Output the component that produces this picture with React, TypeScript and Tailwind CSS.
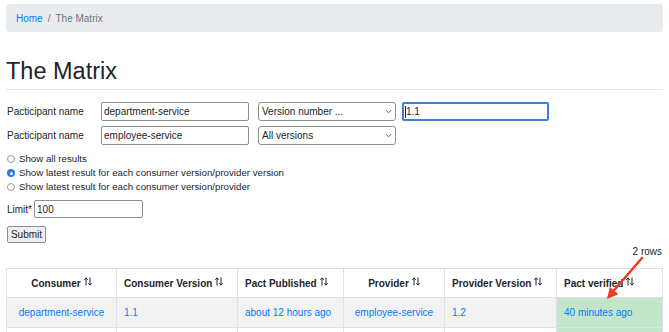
import React from "react";

type Col = {
  label: string;
  width: string;
  center?: boolean;
};

const cols: Col[] = [
  { label: "Consumer", width: "w-[110px]", center: true },
  { label: "Consumer Version", width: "w-[121px]" },
  { label: "Pact Published", width: "w-[106px]" },
  { label: "Provider", width: "w-[101px]", center: true },
  { label: "Provider Version", width: "w-[112px]" },
  { label: "Pact verified", width: "w-[106px]" },
];

function SortIcon() {
  return (
    <svg width="8" height="9" viewBox="0 0 8 9" className="inline-block ml-[3px] -mt-[4px]">
      <path d="M2 8.5V1M0.3 2.8L2 0.8L3.7 2.8" stroke="#212529" strokeWidth="1" fill="none" />
      <path d="M6 0.5V8M4.3 6.2L6 8.2L7.7 6.2" stroke="#212529" strokeWidth="1" fill="none" />
    </svg>
  );
}

function Chevron() {
  return (
    <svg width="7" height="5" viewBox="0 0 7 5" className="shrink-0">
      <path d="M0.8 1L3.5 3.8L6.2 1" stroke="#6b6b6b" strokeWidth="1" fill="none" />
    </svg>
  );
}

function Radio({ checked, label }: { checked?: boolean; label: string }) {
  return (
    <div className="flex items-center h-[14px]">
      {checked ? (
        <span className="w-[8px] h-[8px] rounded-full bg-[#1f7cf2] flex items-center justify-center">
          <span className="w-[3px] h-[3px] rounded-full bg-white" />
        </span>
      ) : (
        <span className="w-[8px] h-[8px] rounded-full border border-[#9a9a9a] bg-white" />
      )}
      <span className="ml-[4px] text-[9.7px]">{label}</span>
    </div>
  );
}

export default function App() {
  return (
    <div className="relative w-[669px] h-[332px] overflow-hidden bg-white px-[6px] pt-[4px] text-[10px] text-[#212529] font-['Liberation_Sans',Arial,sans-serif]">
      <nav className="h-[28px] bg-[#e9ecef] rounded-[3px] flex items-center px-[10px] text-[10px]">
        <span className="text-[#007bff]">Home</span>
        <span className="text-[#6c757d] px-[5px]">/</span>
        <span className="text-[#6c757d]">The Matrix</span>
      </nav>

      <h1 className="mt-[24px] text-[23.5px] leading-[30px]">The Matrix</h1>
      <hr className="mt-[3px] border-t border-[#e6e6e6]" />

      <div className="mt-[12px]">
        <div className="flex items-center h-[19px]">
          <span className="w-[95px] pl-[1px]">Pacticipant name</span>
          <div className="w-[148px] h-[19px] border border-[#8f8f8f] rounded-[2px] flex items-center pl-[2px]">
            department-service
          </div>
          <div className="ml-[9px] w-[138px] h-[19px] border border-[#8f8f8f] rounded-[3px] flex items-center justify-between pl-[3px] pr-[3px]">
            <span>Version number ...</span>
            <Chevron />
          </div>
          <div className="ml-[6px] w-[147px] h-[19px] border-2 border-[#3d7fd6] rounded-[2px] flex items-center pl-[1px]">
            <span className="w-[1px] h-[12px] bg-[#212529]" />
            <span>1.1</span>
          </div>
        </div>
        <div className="flex items-center h-[19px] mt-[5px]">
          <span className="w-[95px] pl-[1px]">Pacticipant name</span>
          <div className="w-[148px] h-[19px] border border-[#8f8f8f] rounded-[2px] flex items-center pl-[2px]">
            employee-service
          </div>
          <div className="ml-[9px] w-[138px] h-[19px] border border-[#8f8f8f] rounded-[3px] flex items-center justify-between pl-[3px] pr-[3px]">
            <span>All versions</span>
            <Chevron />
          </div>
        </div>
      </div>

      <div className="mt-[7px] pl-[1px]">
        <Radio label="Show all results" />
        <Radio checked label="Show latest result for each consumer version/provider version" />
        <Radio label="Show latest result for each consumer version/provider" />
      </div>

      <div className="flex items-center mt-[6px] h-[18px]">
        <span className="pl-[1px]">Limit*</span>
        <div className="ml-[2px] w-[109px] h-[18px] border border-[#8f8f8f] rounded-[2px] flex items-center pl-[2px]">
          100
        </div>
      </div>

      <button className="mt-[8px] ml-[1px] w-[39px] h-[17px] border border-[#8f8f8f] rounded-[2px] bg-[#efefef] text-[10px] leading-none flex items-center justify-center">
        Submit
      </button>

      <div className="mt-[3px] text-right pr-[1px] leading-[12px]">2 rows</div>

      <table className="mt-[10px] w-[656px] table-fixed border-collapse">
        <thead>
          <tr className="h-[29px]">
            {cols.map((c) => (
              <th
                key={c.label}
                className={`${c.width} border border-[#dee2e6] font-bold px-[7px] ${c.center ? "text-center" : "text-left"}`}
              >
                {c.label}
                <SortIcon />
              </th>
            ))}
          </tr>
        </thead>
        <tbody>
          <tr className="h-[30px] bg-[#f2f2f2] text-[#007bff]">
            <td className="border border-[#dee2e6] text-center">department-service</td>
            <td className="border border-[#dee2e6] px-[7px]">1.1</td>
            <td className="border border-[#dee2e6] px-[7px]">about 12 hours ago</td>
            <td className="border border-[#dee2e6] text-center">employee-service</td>
            <td className="border border-[#dee2e6] px-[7px]">1.2</td>
            <td className="border border-[#dee2e6] px-[7px] bg-[#c3e6cb]">40 minutes ago</td>
          </tr>
          <tr className="h-[30px] text-[#007bff]">
            <td className="border border-[#dee2e6]" />
            <td className="border border-[#dee2e6]" />
            <td className="border border-[#dee2e6]" />
            <td className="border border-[#dee2e6]" />
            <td className="border border-[#dee2e6]" />
            <td className="border border-[#dee2e6] bg-[#c3e6cb]" />
          </tr>
        </tbody>
      </table>

      <svg
        width="669"
        height="332"
        viewBox="0 0 669 332"
        className="absolute left-0 top-0 pointer-events-none"
      >
        <line x1="642" y1="258" x2="613" y2="291.5" stroke="#ef3b22" strokeWidth="2.5" strokeLinecap="round" />
        <polygon points="607,299 618.4,294.2 609.8,287" fill="#ef3b22" />
      </svg>
    </div>
  );
}
